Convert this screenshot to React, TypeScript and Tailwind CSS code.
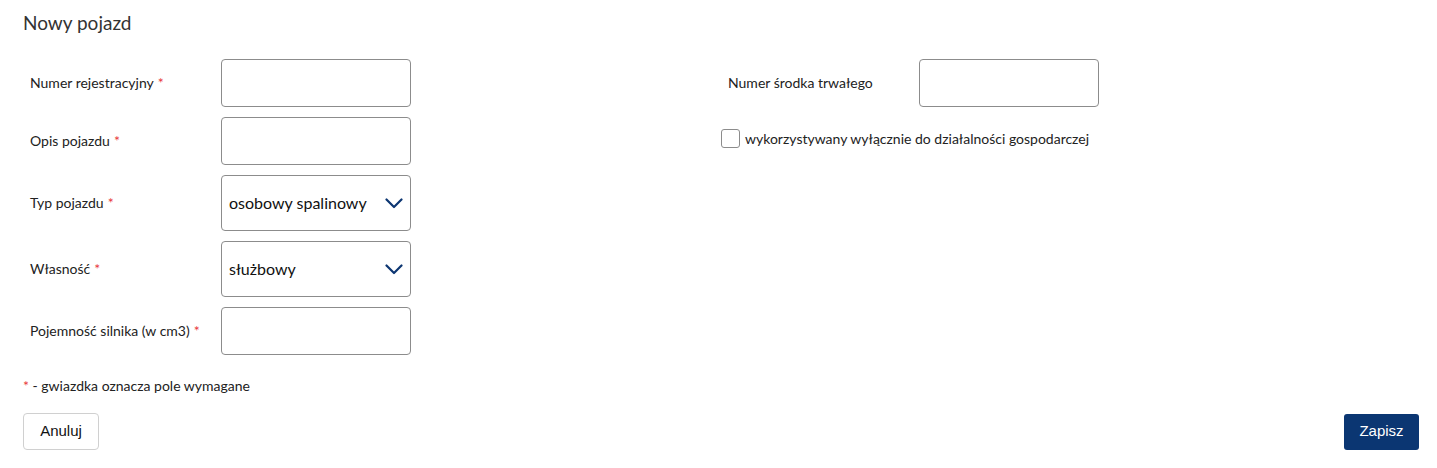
import React from 'react';

const Req = () => <span className="ml-1 text-[#e8383d]">*</span>;

function Chevron() {
    return (
        <svg width="18" height="11" viewBox="0 0 18 11" fill="none" className="shrink-0">
            <path d="M1.5 1.5 L9 9 L16.5 1.5" stroke="#0d3672" strokeWidth="2.2" strokeLinecap="round" strokeLinejoin="round" />
        </svg>
    );
}

function Field({ label, required, children }: { label: string; required?: boolean; children: React.ReactNode }) {
    return (
        <div className="flex items-center">
            <label className="w-[198px] shrink-0 pb-[2px] pl-[7px] text-[14px] text-[#222]">
                {label}
                {required && <Req />}
            </label>
            {children}
        </div>
    );
}

const TextInput = ({ wide = true }: { wide?: boolean }) => (
    <input
        type="text"
        className={`h-[48px] ${wide ? 'w-[190px]' : 'w-[180px]'} rounded-[4px] border border-[#8c8c8c] bg-white px-2 outline-none`}
    />
);

const Select = ({ value }: { value: string }) => (
    <div className="flex h-[56px] w-[190px] items-center justify-between rounded-[4px] border border-[#8c8c8c] bg-white pl-[7px] pr-[7px]">
        <span className="text-[16px] text-[#111]">{value}</span>
        <Chevron />
    </div>
);

export default function App() {
    return (
        <div className="min-h-[468px] bg-white pl-[23px] pr-[18px] pt-[10px] font-['Lato',sans-serif] text-[#222]">
            <h1 className="text-[19px] leading-[26px] text-[#333]">Nowy pojazd</h1>

            <div className="mt-[23px] grid grid-cols-2">
                <div className="flex flex-col gap-[10px]">
                    <Field label="Numer rejestracyjny" required>
                        <TextInput />
                    </Field>
                    <Field label="Opis pojazdu" required>
                        <TextInput />
                    </Field>
                    <Field label="Typ pojazdu" required>
                        <Select value="osobowy spalinowy" />
                    </Field>
                    <Field label="Własność" required>
                        <Select value="służbowy" />
                    </Field>
                    <Field label="Pojemność silnika (w cm3)" required>
                        <TextInput />
                    </Field>
                </div>

                <div className="flex flex-col">
                    <Field label="Numer środka trwałego">
                        <TextInput wide={false} />
                    </Field>
                    <label className="mt-[21px] flex items-center gap-[5px] text-[14px] text-[#222]">
                        <span className="h-[19px] w-[19px] rounded-[3px] border border-[#8c8c8c] bg-white" />
                        wykorzystywany wyłącznie do działalności gospodarczej
                    </label>
                </div>
            </div>

            <p className="mt-[22px] text-[14px] leading-[18px]">
                <span className="text-[#e8383d]">*</span> - gwiazdka oznacza pole wymagane
            </p>

            <div className="mt-[18px] flex items-center justify-between">
                <button className="h-[37px] w-[76px] rounded-[4px] border border-[#d0d0d0] bg-white font-['Liberation_Sans',sans-serif] text-[15px] text-[#111]">
                    Anuluj
                </button>
                <button className="h-[36px] w-[75px] rounded-[3px] bg-[#0b3672] font-['Liberation_Sans',sans-serif] text-[15px] text-white">
                    Zapisz
                </button>
            </div>
        </div>
    );
}
